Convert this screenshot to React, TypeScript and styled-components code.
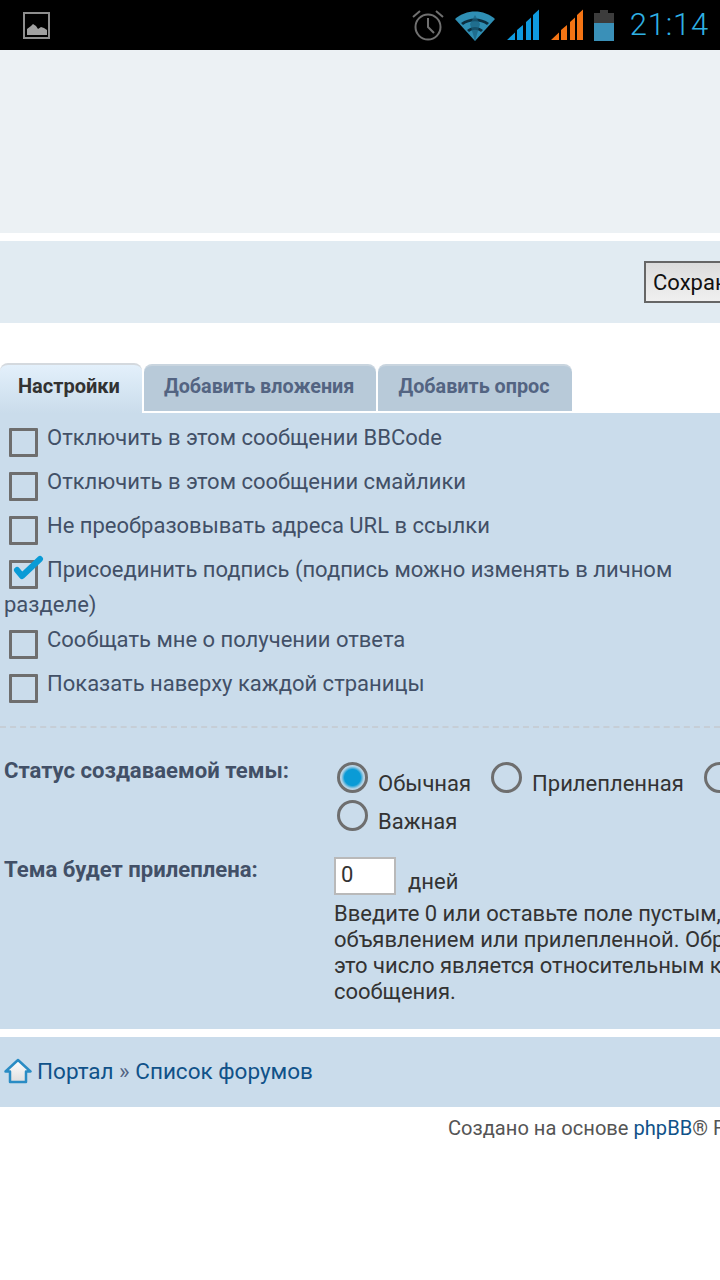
import React from 'react';
import styled, { createGlobalStyle } from 'styled-components';

const GlobalStyle = createGlobalStyle`
  html, body {
    margin: 0;
    padding: 0;
    background: #fff;
  }
  body {
    font-family: Roboto, "Liberation Sans", sans-serif;
    font-size: 22px;
    color: #333;
  }
`;

const Page = styled.div`
  width: 720px;
  height: 1280px;
  overflow: hidden;
  background: #fff;
`;

const StatusBar = styled.div`
  height: 50px;
  background: #000;
  display: flex;
  align-items: center;
  padding: 0 11px 0 23px;
`;

const StatusIcons = styled.div`
  margin-left: auto;
  display: flex;
  align-items: center;
`;

const Clock = styled.div`
  margin-left: 16px;
  font-size: 31px;
  letter-spacing: 0.8px;
  color: #2fb0e3;
  font-weight: 300;
  line-height: 50px;
`;

const TopPanel = styled.div`
  height: 183px;
  background: #ecf1f4;
  margin-bottom: 8px;
`;

const SavePanel = styled.div`
  height: 82px;
  background: #e1ebf2;
  margin-bottom: 40px;
  padding: 20px 0 0 644px;
  box-sizing: border-box;
  overflow: hidden;
`;

const SaveButton = styled.button`
  width: 140px;
  height: 42px;
  padding: 0 0 0 7px;
  border: 2px solid #666;
  background: linear-gradient(#dcdcdc, #f0f0f0);
  font: 22px Roboto, sans-serif;
  color: #111;
  text-align: left;
  white-space: nowrap;
`;

const Tabs = styled.div`
  display: flex;
  align-items: flex-end;
  height: 48px;
  margin-bottom: 2px;
`;

const Tab = styled.div<{ $active?: boolean }>`
  box-sizing: border-box;
  height: ${(p) => (p.$active ? '50px' : '47px')};
  margin-right: 2px;
  margin-bottom: ${(p) => (p.$active ? '-2px' : '0')};
  padding: ${(p) => (p.$active ? '0 22px 0 18px' : '0 22px 4px 20px')};
  display: flex;
  align-items: ${(p) => (p.$active ? 'flex-start' : 'center')};
  line-height: 42px;
  font-size: ${(p) => (p.$active ? '20px' : '19.8px')};
  font-weight: 700;
  border-radius: 8px 8px 0 0;
  color: ${(p) => (p.$active ? '#323232' : '#536482')};
  background: ${(p) =>
    p.$active ? 'linear-gradient(#e3f0fb, #cadceb)' : '#b8cad9'};
  border-top: 2px solid ${(p) => (p.$active ? '#d4d9de' : '#c9d5df')};
`;

const Panel = styled.div`
  height: 616px;
  background: #cadceb;
  padding-top: 3px;
  box-sizing: border-box;
  overflow: hidden;
`;

const Options = styled.div`
  padding: 0 4px 20px;
  border-bottom: 2px dashed #c6ced6;
  color: #425067;
  line-height: 26px;
`;

const Check = styled.span`
  position: relative;
  display: inline-block;
  box-sizing: border-box;
  width: 29px;
  height: 29px;
  margin: 12px 9px 3px 5px;
  vertical-align: -15px;
  border: 3px solid #6e6e6e;
  border-radius: 1px;
`;

const Tick = styled.svg`
  position: absolute;
  left: -2px;
  top: -13px;
`;

const FormRow = styled.div<{ $gap: number }>`
  display: flex;
  padding-left: 4px;
  margin-top: ${(p) => p.$gap}px;
`;

const Label = styled.div`
  width: 330px;
  flex: none;
  font-size: 22.1px;
  font-weight: 700;
  color: #425067;
`;

const Field = styled.div`
  flex: none;
  width: 520px;
`;

const RadioGroup = styled.div`
  padding-top: 5px;
`;

const RadioLine = styled.div`
  display: flex;
  height: 38px;
  color: #333;
  white-space: nowrap;
`;

const Radio = styled.span<{ $checked?: boolean }>`
  box-sizing: border-box;
  flex: none;
  width: 31px;
  height: 31px;
  margin: 0 10px 0 3px;
  border-radius: 50%;
  border: 3px solid #6e6e6e;
  background: ${(p) =>
    p.$checked
      ? 'radial-gradient(circle, #0a9bd6 0 8px, #a9cfe4 11px, #cadceb 13px)'
      : 'transparent'};
`;

const RadioText = styled.span`
  margin-right: 17px;
  line-height: 44px;
`;

const NumberInput = styled.div`
  box-sizing: border-box;
  width: 62px;
  height: 38px;
  margin-top: 1px;
  padding-left: 5px;
  background: #fff;
  border: 2px solid #b9b9b9;
  line-height: 32px;
  color: #333;
`;

const DaysRow = styled.div`
  display: flex;
  gap: 12px;
  line-height: 52px;
  height: 45px;
  color: #333;
`;

const Hint = styled.div`
  color: #333;
  line-height: 26px;
  white-space: nowrap;
`;

const Crumbs = styled.div`
  height: 70px;
  margin-top: 8px;
  background: #cadceb;
  display: flex;
  align-items: center;
  gap: 5px;
  padding: 0 0 2px 4px;
  box-sizing: border-box;
  font-size: 22.5px;
  color: #536482;
`;

const CrumbLink = styled.a`
  color: #105289;
  text-decoration: none;
`;

const Footer = styled.div`
  padding: 8px 0 0 448px;
  font-size: 20.1px;
  line-height: 26px;
  white-space: nowrap;
  color: #555;
`;

const AlarmIcon = () => (
  <svg width="34" height="34" viewBox="0 0 34 34" fill="none" stroke="#707070" strokeWidth="2">
    <circle cx="17" cy="19" r="12.5" />
    <path d="M17 10v9l6 6" />
    <path d="M2 9l7-6M32 9l-7-6" />
  </svg>
);

const WifiIcon = () => (
  <svg width="42" height="32" viewBox="0 0 42 32" style={{ marginLeft: 9 }}>
    <path d="M1 10C12 0 30 0 41 10L21 32Z" fill="#2f8fb4" />
    <path d="M7 14C15 8 27 8 35 14l-2 2C26 11 16 11 9 16ZM13 21c5-4 11-4 16 0l-2 2c-4-3-8-3-12 0Z" fill="#0c2f40" />
    <path d="M21 6l5 9-5 17-5-17Z" fill="#1a5f7d" opacity="0.7" />
  </svg>
);

const SignalIcon = ({ color }: { color: string }) => (
  <svg width="33" height="32" viewBox="0 0 33 32" fill={color} style={{ marginLeft: 11 }}>
    <path d="M0 31L8 23.500V31ZM10 31V21L16 16V31ZM19 31V13L24 8.500V31ZM26 31V6L32 .500V31Z" />
  </svg>
);

const BatteryIcon = () => (
  <svg width="20" height="31" viewBox="0 0 20 31" style={{ marginLeft: 10 }}>
    <path d="M6 0h8v3h6v28H0V3h6Z" fill="#3c3c3c" />
    <path d="M0 13h20v18H0Z" fill="#3a90b8" />
  </svg>
);

const PictureIcon = () => (
  <svg width="27" height="27" viewBox="0 0 27 27">
    <rect x="1" y="1" width="25" height="25" fill="none" stroke="#8e8e8e" strokeWidth="2" />
    <path d="M4 23V17L8 14L10 12L13 14L15 17L18 15L21 16L24 18V23Z" fill="#a0a0a0" />
  </svg>
);

const HomeIcon = () => (
  <svg width="28" height="26" viewBox="0 0 28 26">
    <defs>
      <linearGradient id="home" x1="0" y1="0" x2="0" y2="1">
        <stop offset="0" stopColor="#ffffff" />
        <stop offset="1" stopColor="#dedede" />
      </linearGradient>
    </defs>
    <path
      d="M14 2L26.500 13.500H22V24H6V13.500H1.500Z"
      fill="url(#home)"
      stroke="#2a8cc4"
      strokeWidth="2.500"
      strokeLinejoin="round"
    />
  </svg>
);

const options = [
  { text: 'Отключить в этом сообщении BBCode' },
  { text: 'Отключить в этом сообщении смайлики' },
  { text: 'Не преобразовывать адреса URL в ссылки' },
  { text: 'Присоединить подпись (подпись можно изменять в личном разделе)', checked: true },
  { text: 'Сообщать мне о получении ответа' },
  { text: 'Показать наверху каждой страницы' },
];

const hintLines = [
  'Введите 0 или оставьте поле пустым, чтобы тема не была',
  'объявлением или прилепленной. Обратите внимание, что',
  'это число является относительным к дате создания',
  'сообщения.',
];

const App = () => {
  return (
    <Page>
      <GlobalStyle />
      <StatusBar>
        <PictureIcon />
        <StatusIcons>
          <AlarmIcon />
          <WifiIcon />
          <SignalIcon color="#0f9be0" />
          <SignalIcon color="#f47414" />
          <BatteryIcon />
          <Clock>21:14</Clock>
        </StatusIcons>
      </StatusBar>
      <TopPanel />
      <SavePanel>
        <SaveButton>Сохранить</SaveButton>
      </SavePanel>
      <Tabs>
        <Tab $active>Настройки</Tab>
        <Tab>Добавить вложения</Tab>
        <Tab>Добавить опрос</Tab>
      </Tabs>
      <Panel>
        <Options>
          {options.map((o) => (
            <div key={o.text}>
              <Check>
                {o.checked && (
                  <Tick width="34" height="34" viewBox="0 0 34 34">
                    <path
                      d="M7 20l5 6L30 9"
                      fill="none"
                      stroke="#0a9bd6"
                      strokeWidth="6"
                      strokeLinecap="round"
                      strokeLinejoin="round"
                    />
                  </Tick>
                )}
              </Check>
              {o.text}
            </div>
          ))}
        </Options>
        <FormRow $gap={29}>
          <Label>Статус создаваемой темы:</Label>
          <Field>
            <RadioGroup>
              <RadioLine>
                <Radio $checked />
                <RadioText>Обычная</RadioText>
                <Radio />
                <RadioText>Прилепленная</RadioText>
                <Radio />
                <RadioText>Объявление</RadioText>
              </RadioLine>
              <RadioLine>
                <Radio />
                <RadioText>Важная</RadioText>
              </RadioLine>
            </RadioGroup>
          </Field>
        </FormRow>
        <FormRow $gap={18}>
          <Label>Тема будет прилеплена:</Label>
          <Field>
            <DaysRow>
              <NumberInput>0</NumberInput>
              <span>дней</span>
            </DaysRow>
            <Hint>
              {hintLines.map((line) => (
                <div key={line}>{line}</div>
              ))}
            </Hint>
          </Field>
        </FormRow>
      </Panel>
      <Crumbs>
        <HomeIcon />
        <span>
          <CrumbLink href="#">Портал</CrumbLink> » <CrumbLink href="#">Список форумов</CrumbLink>
        </span>
      </Crumbs>
      <Footer>
        Создано на основе <CrumbLink href="#">phpBB</CrumbLink>® Forum Software
      </Footer>
    </Page>
  );
};

export default App;
